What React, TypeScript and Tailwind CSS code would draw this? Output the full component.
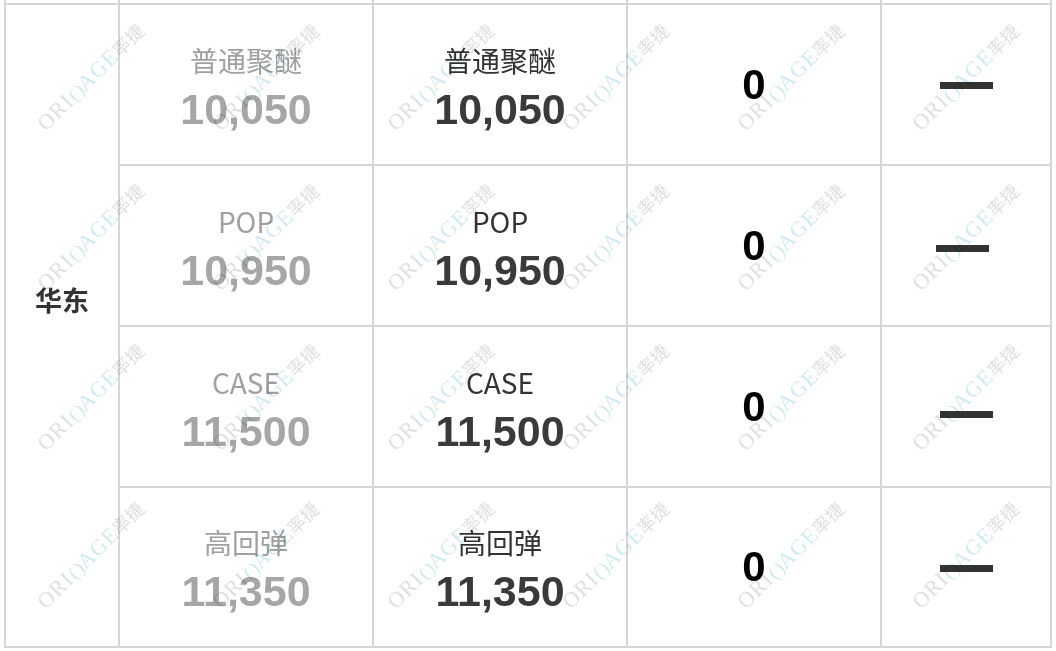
import React from "react";

const rows = [
  { name: "普通聚醚", price: "10,050", change: "0", dash: "translate-y-[1px]" },
  { name: "POP", price: "10,950", change: "0", dash: "translate-y-[3px] -translate-x-[4px]" },
  { name: "CASE", price: "11,500", change: "0", dash: "translate-y-[8px]" },
  { name: "高回弹", price: "11,350", change: "0", dash: "translate-y-[1px]" },
];

const cjk = "font-['Noto_Sans_CJK_SC',sans-serif]";
const num = "font-['Liberation_Sans',Arial,sans-serif] font-bold";

// watermark grid (bottom-left anchor of each stamp)
const markXs = [48, 223, 398, 573, 748, 923];
const markYs = [134, 294, 454, 612];

const Watermark = ({ x, y }: { x: number; y: number }) => (
  <div
    className="absolute flex items-baseline whitespace-nowrap origin-bottom-left -rotate-45 leading-[22px] h-[22px] mix-blend-multiply"
    style={{ left: x, top: y - 22 }}
  >
    <span className="font-['Liberation_Serif',serif] text-[22px] text-[#e0e0e0] tracking-[1px]">ORI</span>
    <span className="font-['Liberation_Serif',serif] text-[19px] text-[#cfe8ef] ml-[1px]">(</span>
    <span className="font-['Liberation_Serif',serif] text-[19px] text-[#cfe8ef] ml-[2px]">)</span>
    <span className="font-['Liberation_Serif',serif] text-[22px] text-[#d3eaf0] tracking-[1px]">AGE</span>
    <span className={`${cjk} text-[18px] text-[#e0e0e0]`}>率捷</span>
  </div>
);

const PriceCell = ({ name, price, dim }: { name: string; price: string; dim?: boolean }) => (
  <div className="bg-white flex flex-col items-center justify-center pt-[5px]">
    <div className={`${cjk} text-[28px] leading-[34px] ${dim ? "text-[#a0a0a0]" : "text-[#333333]"}`}>
      {name}
    </div>
    <div className={`${num} text-[43px] leading-[46px] mt-[9px] ${dim ? "text-[#a6a6a6]" : "text-[#3a3a3a]"}`}>
      {price}
    </div>
  </div>
);

export default function App() {
  return (
    <div className="relative w-[1056px] h-[651px] bg-white overflow-hidden">
      <div className="ml-[4px] w-[1048px] bg-[#d6d6d6] px-[2px] pb-[2px] grid grid-cols-[112px_252px_252px_252px_168px] grid-rows-[3px_159px_159px_159px_158px] gap-[2px]">
        {/* tail of the row above */}
        <div className="bg-white" />
        <div className="bg-white" />
        <div className="bg-white" />
        <div className="bg-white" />
        <div className="bg-white" />

        <div className="bg-white row-span-4 flex items-center justify-center pb-[50px]">
          <span className={`${cjk} font-bold text-[27px] text-[#333333]`}>华东</span>
        </div>

        {rows.map((r) => (
          <React.Fragment key={r.name}>
            <PriceCell name={r.name} price={r.price} dim />
            <PriceCell name={r.name} price={r.price} />
            <div className="bg-white flex items-center justify-center">
              <span className={`${num} text-[42px] leading-none text-black`}>{r.change}</span>
            </div>
            <div className="bg-white flex items-center justify-center">
              <div className={`w-[53px] h-[7px] bg-[#333333] ${r.dash}`} />
            </div>
          </React.Fragment>
        ))}
      </div>

      <div className="absolute inset-0 pointer-events-none">
        {markYs.map((y) =>
          markXs.map((x) => <Watermark key={`${x}-${y}`} x={x} y={y} />)
        )}
      </div>
    </div>
  );
}
